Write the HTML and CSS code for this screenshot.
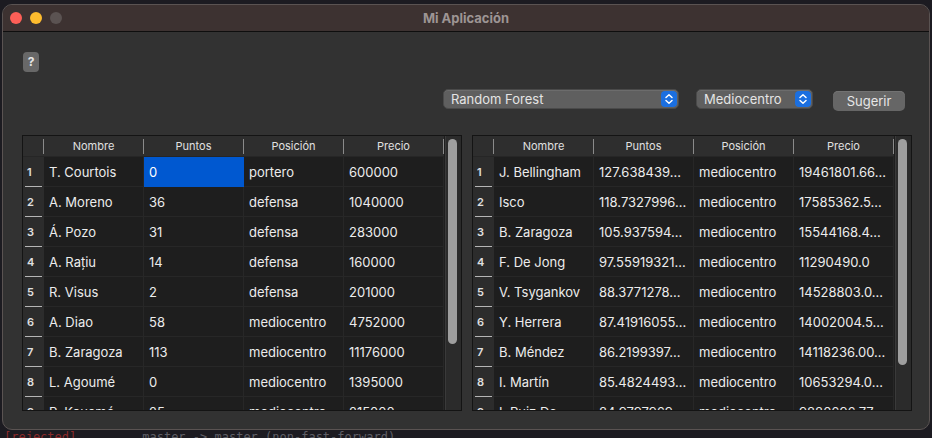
FILE: index.html
```html
<!DOCTYPE html>
<html lang="es">
<head>
<meta charset="utf-8">
<title>Mi Aplicación</title>
<link rel="stylesheet" href="styles.css">
</head>
<body>
<div class="window">
  <div class="titlebar">
    <div class="lights">
      <span class="light red"></span>
      <span class="light yellow"></span>
      <span class="light gray"></span>
    </div>
    <div class="title">Mi Aplicación</div>
  </div>
  <div class="content">
    <div class="help-row"><button class="help">?</button></div>
    <div class="controls">
      <div class="combo combo-model"><span>Random Forest</span>
        <span class="stepper"><svg width="16" height="16" viewBox="0 0 16 16"><path d="M5 6.5 L8 3.8 L11 6.5" fill="none" stroke="#fff" stroke-width="1.5" stroke-linecap="round" stroke-linejoin="round"/><path d="M5 9.5 L8 12.2 L11 9.5" fill="none" stroke="#fff" stroke-width="1.5" stroke-linecap="round" stroke-linejoin="round"/></svg></span>
      </div>
      <div class="combo combo-pos"><span>Mediocentro</span>
        <span class="stepper"><svg width="16" height="16" viewBox="0 0 16 16"><path d="M5 6.5 L8 3.8 L11 6.5" fill="none" stroke="#fff" stroke-width="1.5" stroke-linecap="round" stroke-linejoin="round"/><path d="M5 9.5 L8 12.2 L11 9.5" fill="none" stroke="#fff" stroke-width="1.5" stroke-linecap="round" stroke-linejoin="round"/></svg></span>
      </div>
      <button class="btn">Sugerir</button>
    </div>
    <div class="tables">
      <div class="table">
        <div class="grid">
          <div class="head">
            <div class="corner"></div>
            <div class="hcell">Nombre</div>
            <div class="hcell">Puntos</div>
            <div class="hcell">Posición</div>
            <div class="hcell">Precio</div>
          </div>
          <div class="rows">
            <div class="row"><div class="rnum">1</div><div class="cell">T. Courtois</div><div class="cell sel">0</div><div class="cell">portero</div><div class="cell">600000</div></div>
            <div class="row"><div class="rnum">2</div><div class="cell">A. Moreno</div><div class="cell">36</div><div class="cell">defensa</div><div class="cell">1040000</div></div>
            <div class="row"><div class="rnum">3</div><div class="cell">Á. Pozo</div><div class="cell">31</div><div class="cell">defensa</div><div class="cell">283000</div></div>
            <div class="row"><div class="rnum">4</div><div class="cell">A. Rațiu</div><div class="cell">14</div><div class="cell">defensa</div><div class="cell">160000</div></div>
            <div class="row"><div class="rnum">5</div><div class="cell">R. Visus</div><div class="cell">2</div><div class="cell">defensa</div><div class="cell">201000</div></div>
            <div class="row"><div class="rnum">6</div><div class="cell">A. Diao</div><div class="cell">58</div><div class="cell">mediocentro</div><div class="cell">4752000</div></div>
            <div class="row"><div class="rnum">7</div><div class="cell">B. Zaragoza</div><div class="cell">113</div><div class="cell">mediocentro</div><div class="cell">11176000</div></div>
            <div class="row"><div class="rnum">8</div><div class="cell">L. Agoumé</div><div class="cell">0</div><div class="cell">mediocentro</div><div class="cell">1395000</div></div>
            <div class="row"><div class="rnum">9</div><div class="cell">P. Kouamé</div><div class="cell">25</div><div class="cell">mediocentro</div><div class="cell">215000</div></div>
          </div>
        </div>
        <div class="scroll"><div class="thumb thumb-left"></div></div>
      </div>
      <div class="table">
        <div class="grid">
          <div class="head">
            <div class="corner"></div>
            <div class="hcell">Nombre</div>
            <div class="hcell">Puntos</div>
            <div class="hcell">Posición</div>
            <div class="hcell">Precio</div>
          </div>
          <div class="rows">
            <div class="row"><div class="rnum">1</div><div class="cell">J. Bellingham</div><div class="cell">127.638439...</div><div class="cell">mediocentro</div><div class="cell">19461801.66...</div></div>
            <div class="row"><div class="rnum">2</div><div class="cell">Isco</div><div class="cell">118.7327996...</div><div class="cell">mediocentro</div><div class="cell">17585362.5...</div></div>
            <div class="row"><div class="rnum">3</div><div class="cell">B. Zaragoza</div><div class="cell">105.937594...</div><div class="cell">mediocentro</div><div class="cell">15544168.4...</div></div>
            <div class="row"><div class="rnum">4</div><div class="cell">F. De Jong</div><div class="cell">97.55919321...</div><div class="cell">mediocentro</div><div class="cell">11290490.0</div></div>
            <div class="row"><div class="rnum">5</div><div class="cell">V. Tsygankov</div><div class="cell">88.3771278...</div><div class="cell">mediocentro</div><div class="cell">14528803.0...</div></div>
            <div class="row"><div class="rnum">6</div><div class="cell">Y. Herrera</div><div class="cell">87.41916055...</div><div class="cell">mediocentro</div><div class="cell">14002004.5...</div></div>
            <div class="row"><div class="rnum">7</div><div class="cell">B. Méndez</div><div class="cell">86.2199397...</div><div class="cell">mediocentro</div><div class="cell">14118236.00...</div></div>
            <div class="row"><div class="rnum">8</div><div class="cell">I. Martín</div><div class="cell">85.4824493...</div><div class="cell">mediocentro</div><div class="cell">10653294.0...</div></div>
            <div class="row"><div class="rnum">9</div><div class="cell">I. Ruiz De...</div><div class="cell">84.9797969...</div><div class="cell">mediocentro</div><div class="cell">9880696.77...</div></div>
          </div>
        </div>
        <div class="scroll"><div class="thumb thumb-right"></div></div>
      </div>
    </div>
  </div>
</div>
<div class="terminal"><span class="bracket">[rejected]</span><span class="term-text">master -&gt; master (non-fast-forward)</span></div>
</body>
</html>
```

FILE: styles.css
```css
* { box-sizing: border-box; }

html, body {
  margin: 0;
  padding: 0;
  width: 932px;
  height: 438px;
  overflow: hidden;
  background: #1c1b21;
  font-family: Inter, "Noto Sans", "Liberation Sans", sans-serif;
}

.window {
  margin: 4px 0 0 2px;
  width: 928px;
  height: 426px;
  border-radius: 10px;
  background: #323232;
  border: 1px solid #5a5352;
  overflow: hidden;
  display: flex;
  flex-direction: column;
}

.titlebar {
  height: 27px;
  flex: none;
  background: #3d3231;
  border-bottom: 1px solid #0e0e0e;
  display: flex;
  align-items: center;
  position: relative;
}

.lights {
  display: flex;
  gap: 8px;
  padding-left: 7px;
}

.light {
  width: 12px;
  height: 12px;
  border-radius: 50%;
  display: block;
}
.light.red { background: #fe5f57; }
.light.yellow { background: #febc2e; }
.light.gray { background: #5b5352; }

.title {
  position: absolute;
  left: 0;
  right: 0;
  top: 0;
  bottom: 0;
  display: flex;
  align-items: center;
  justify-content: center;
  color: #9d9594;
  font-size: 13px;
  font-weight: 700;
  pointer-events: none;
}

.content {
  flex: 1;
  display: flex;
  flex-direction: column;
  padding: 20px 0 0 19px;
}

.help-row { display: flex; padding-left: 1px; }

.help {
  width: 16px;
  height: 20px;
  border: none;
  border-radius: 4px;
  background: #686868;
  color: #e6e6e6;
  font-family: inherit;
  font-size: 12px;
  font-weight: 700;
  padding: 0;
  line-height: 20px;
}

.controls {
  display: flex;
  justify-content: flex-end;
  align-items: flex-start;
  margin-top: 17px;
  padding-right: 24px;
  height: 22px;
}

.combo {
  height: 20px;
  border-radius: 5px;
  background: #5f5f5f;
  border: 1px solid #4a4a4a;
  box-shadow: inset 0 1px 0 #6c6c6c;
  color: #e4e4e4;
  font-size: 13px;
  display: flex;
  align-items: center;
  justify-content: space-between;
  padding: 0 1px 0 7px;
}

.combo-model { width: 236px; }
.combo-pos { width: 117px; margin-left: 17px; }

.stepper {
  width: 16px;
  height: 16px;
  border-radius: 4px;
  background: #1b6fe0;
  display: flex;
}

.btn {
  margin-left: 20px;
  margin-top: 2px;
  width: 72px;
  height: 20px;
  border: none;
  border-radius: 5px;
  background: #666666;
  box-shadow: inset 0 1px 0 #727272;
  color: #e6e6e6;
  font-family: inherit;
  font-size: 13px;
  padding: 0;
}

.tables {
  display: flex;
  gap: 10px;
  margin-top: 24px;
}

.table {
  width: 440px;
  height: 276px;
  border: 1px solid #141414;
  display: flex;
  background: #1e1e1e;
}

.grid {
  width: 422px;
  display: flex;
  flex-direction: column;
  overflow: hidden;
}

.head {
  height: 21px;
  flex: none;
  display: flex;
  background: #2e2e2e;
  border-bottom: 1px solid #262626;
}

.corner {
  width: 21px;
  flex: none;
  border-right: 1px solid #8a8a8a;
  margin: 3px 0 2px;
}

.hcell {
  width: 100px;
  flex: none;
  border-right: 1px solid #8a8a8a;
  margin: 3px 0 2px;
  text-align: center;
  color: #e0e0e0;
  font-size: 11px;
  line-height: 15px;
}

.rows {
  flex: 1;
  overflow: hidden;
}

.row {
  display: flex;
  height: 30px;
}

.rnum {
  width: 21px;
  flex: none;
  background: #2c2c2c;
  color: #e0e0e0;
  font-size: 11px;
  font-weight: 600;
  padding-left: 4px;
  display: flex;
  align-items: center;
  position: relative;
}
.rnum::after {
  content: "";
  position: absolute;
  left: 2px;
  right: 2px;
  bottom: 0;
  height: 1px;
  background: #b5b5b5;
}

.cell {
  width: 100px;
  flex: none;
  border-right: 1px solid #272727;
  border-bottom: 1px solid #272727;
  color: #ececec;
  font-size: 13px;
  padding-left: 5px;
  display: flex;
  align-items: center;
  white-space: nowrap;
  overflow: hidden;
}

.cell.sel {
  background: #0058d0;
  border-color: #0058d0;
  color: #ffffff;
}

.scroll {
  width: 16px;
  flex: none;
  margin-left: 1px;
  background: #2b2b2b;
  border-left: 1px solid #3a3a3a;
  padding: 3px 3px 0 2px;
}

.thumb {
  width: 9px;
  border-radius: 5px;
  background: #9e9e9e;
}
.thumb-left { height: 205px; }
.thumb-right { height: 226px; }

.terminal {
  margin-top: -1px;
  height: 12px;
  overflow: hidden;
  font-family: "DejaVu Sans Mono", monospace;
  font-size: 12px;
  line-height: 16px;
  color: #5f5f66;
  white-space: nowrap;
}
.bracket {
  color: #8a2a2a;
  margin-left: 4px;
  margin-right: 66px;
}
```
